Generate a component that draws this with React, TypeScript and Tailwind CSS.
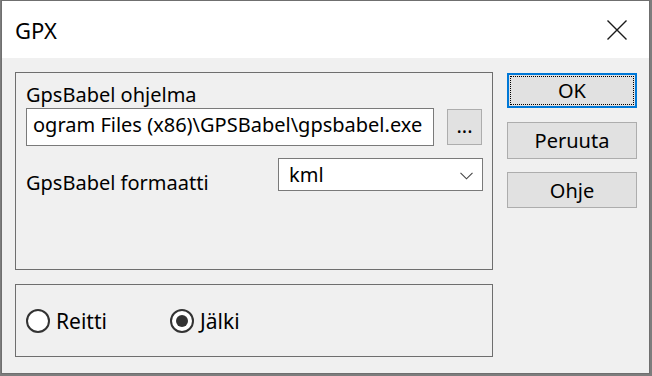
function CloseIcon() {
  return (
    <svg width="22" height="22" viewBox="0 0 22 22" fill="none" stroke="#1a1a1a" strokeWidth="1.4">
      <path d="M1.5 1.5 L20.5 20.5 M20.5 1.5 L1.5 20.5" />
    </svg>
  );
}

function Chevron() {
  return (
    <svg width="13" height="8" viewBox="0 0 13 8" fill="none" stroke="#444" strokeWidth="1.1">
      <path d="M0.5 0.8 L6.5 6.8 L12.5 0.8" />
    </svg>
  );
}

function Radio({ label, checked }: { label: string; checked?: boolean }) {
  return (
    <div className="flex items-center">
      <div className="w-[24px] h-[24px] rounded-full border-2 border-[#333] bg-white flex items-center justify-center">
        {checked && <div className="w-[12px] h-[12px] rounded-full bg-[#333]" />}
      </div>
      <span className="ml-[6px] text-[21px] leading-[24px] text-black">{label}</span>
    </div>
  );
}

function Button({ label, focused, className }: { label: string; focused?: boolean; className?: string }) {
  if (focused) {
    return (
      <div className={`relative w-[130px] border-2 border-[#0078d7] bg-[#e1e1e1] flex items-center justify-center ${className}`}>
        <div className="absolute inset-px border border-dotted border-black" />
        <span className="leading-[31px]">{label}</span>
      </div>
    );
  }
  return (
    <div className={`w-[130px] border border-[#adadad] bg-[#e1e1e1] flex items-center justify-center ${className}`}>
      <span className="leading-[31px]">{label}</span>
    </div>
  );
}

export default function App() {
  return (
    <div className="w-[652px] h-[376px] bg-[#7d7d7d] pl-px overflow-hidden" style={{ fontFamily: '"Noto Sans", sans-serif' }}>
      <div className="w-[649px] h-[374px] border border-[#6f6f6f] flex flex-col text-[20px] text-black">
        <div className="h-[57px] bg-white flex items-center justify-between pl-[13px] pr-[21px]">
          <span className="text-[22px] leading-[30px]">GPX</span>
          <CloseIcon />
        </div>
        <div className="flex-1 bg-[#f0f0f0] flex">
          <div className="ml-[13px] pt-[14px] flex flex-col">
            <div className="w-[478px] h-[198px] border border-[#6e6e6e] pt-[10px] pl-[10px]">
              <div className="leading-[24px]">GpsBabel ohjelma</div>
              <div className="mt-px flex items-start">
                <div className="w-[408px] h-[38px] border border-[#7a7a7a] bg-white pl-[6px] overflow-hidden whitespace-nowrap leading-[32px]">
                  ogram Files (x86)\GPSBabel\gpsbabel.exe
                </div>
                <div className="ml-[13px] mt-px w-[35px] h-[36px] border border-[#adadad] bg-[#e1e1e1] flex justify-center leading-[32px]">
                  ...
                </div>
              </div>
              <div className="mt-[12px] flex items-start">
                <div className="w-[252px] mt-[13px] leading-[24px]">GpsBabel formaatti</div>
                <div className="w-[205px] h-[33px] border border-[#7a7a7a] bg-white pl-[10px] pr-[9px] flex items-center justify-between">
                  <span className="leading-[31px]">kml</span>
                  <div className="mt-[3px]">
                    <Chevron />
                  </div>
                </div>
              </div>
            </div>
            <div className="mt-[14px] w-[478px] h-[73px] border border-[#6e6e6e] pl-[10px] flex items-center">
              <div className="w-[144px]">
                <Radio label="Reitti" />
              </div>
              <Radio label="Jälki" checked />
            </div>
          </div>
          <div className="ml-[14px] pt-[15px] flex flex-col">
            <Button label="OK" focused className="h-[35px]" />
            <Button label="Peruuta" className="h-[37px] mt-[14px]" />
            <Button label="Ohje" className="h-[36px] mt-[13px]" />
          </div>
        </div>
      </div>
    </div>
  );
}
